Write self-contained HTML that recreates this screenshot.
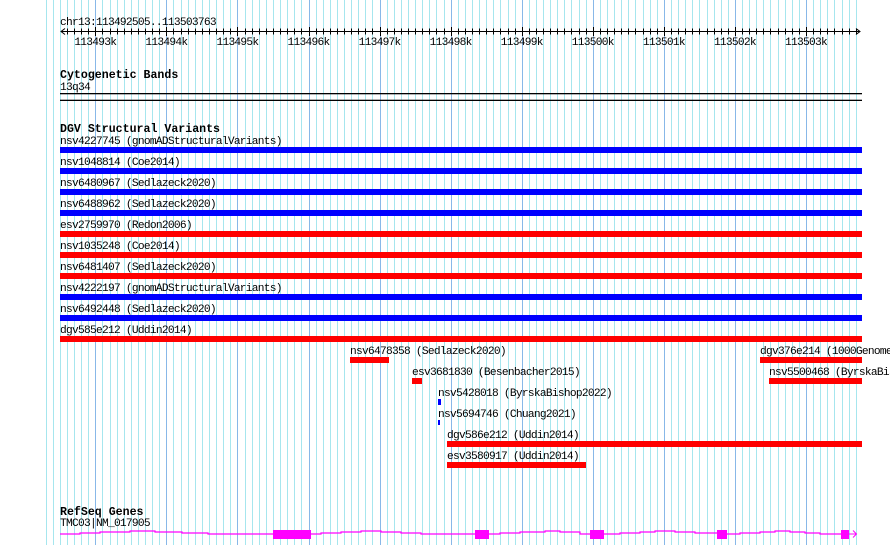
<!DOCTYPE html>
<html><head><meta charset="utf-8"><style>
html,body{margin:0;padding:0;background:#fff;width:890px;height:545px;overflow:hidden}
svg{display:block}
text{font-family:"Liberation Mono",monospace;font-size:11.2px;letter-spacing:-0.72px;fill:#000}
.b{font-weight:bold;font-size:11.6px;letter-spacing:0}
</style></head><body>
<svg id="s" width="890" height="545" xmlns="http://www.w3.org/2000/svg">
<g id="grid"></g>
<g id="ticks" stroke="#000" stroke-width="1"></g>
<text x="60" y="25">chr13:113492505..113503763</text>
<line x1="61" y1="31.5" x2="860" y2="31.5" stroke="#000"/>
<polyline points="65,28.5 61,31.5 65,34.5" fill="none" stroke="#000"/>
<polyline points="856,28.5 860,31.5 856,34.5" fill="none" stroke="#000"/>
<g id="lbl"></g>
<text class="b" x="60" y="78">Cytogenetic Bands</text>
<text x="60" y="90">13q34</text>
<rect x="60" y="93" width="802" height="1.3" fill="#000"/>
<rect x="60" y="99.7" width="802" height="1.3" fill="#000"/>
<text class="b" x="60" y="132">DGV Structural Variants</text>
<g id="rows"></g>
<text x="350" y="354">nsv6478358 (Sedlazeck2020)</text>
<rect x="350" y="357" width="39" height="6" fill="#f00"/>
<text x="412" y="375">esv3681830 (Besenbacher2015)</text>
<rect x="412" y="378" width="10" height="6" fill="#f00"/>
<text x="438" y="396">nsv5428018 (ByrskaBishop2022)</text>
<rect x="438" y="399" width="3" height="6" fill="#00f"/>
<text x="438" y="417">nsv5694746 (Chuang2021)</text>
<rect x="438" y="420" width="2" height="5" fill="#00f"/>
<text x="447" y="438">dgv586e212 (Uddin2014)</text>
<rect x="447" y="441" width="415" height="6" fill="#f00"/>
<text x="447" y="459">esv3580917 (Uddin2014)</text>
<rect x="447" y="462" width="139" height="6" fill="#f00"/>
<text x="760" y="354">dgv376e214 (1000Genomes)</text>
<rect x="760" y="357" width="102" height="6" fill="#f00"/>
<text x="769" y="375">nsv5500468 (ByrskaBishop2022)</text>
<rect x="769" y="378" width="93" height="6" fill="#f00"/>
<text class="b" x="60" y="515">RefSeq Genes</text>
<text x="60" y="526">TMC03|NM_017905</text>
<polyline fill="none" stroke="#f0f" stroke-width="1.2" points="60,534 80,534 80,533 100,533 100,532 130,532 130,531 155,531 155,532 182,532 182,533 208,533 208,534 273,534"/>
<polyline fill="none" stroke="#f0f" stroke-width="1.2" points="311,534 321,534 321,533 341,533 341,532 361,532 361,531 381,531 381,532 401,532 401,533 421,533 421,534 475,534"/>
<polyline fill="none" stroke="#f0f" stroke-width="1.2" points="489,534 500,534 500,533 520,533 520,532 545,532 545,531 560,531 560,532 580,532 580,534 590,534"/>
<polyline fill="none" stroke="#f0f" stroke-width="1.2" points="604,534 620,534 620,533 640,533 640,532 655,532 655,531 675,531 675,532 695,532 695,533 717,533"/>
<polyline fill="none" stroke="#f0f" stroke-width="1.2" points="727,534 740,534 740,533 760,533 760,532 775,532 775,531 790,531 790,532 805,532 805,533 820,533 820,534 841,534"/>
<rect x="273" y="530" width="38" height="9" fill="#f0f"/>
<rect x="475" y="530" width="14" height="9" fill="#f0f"/>
<rect x="590" y="530" width="14" height="9" fill="#f0f"/>
<rect x="717" y="530" width="10" height="9" fill="#f0f"/>
<rect x="841" y="530" width="8" height="9" fill="#f0f"/>
<line x1="849" y1="534" x2="856" y2="534" stroke="#f0f"/>
<polyline fill="none" stroke="#f0f" points="853,530.5 856.5,534 853,537.5"/>
</svg>
<script>
var ns="http://www.w3.org/2000/svg";
function el(p,t,a){var e=document.createElementNS(ns,t);for(var k in a)e.setAttribute(k,a[k]);p.appendChild(e);return e;}
var g=document.getElementById('grid'),tk=document.getElementById('ticks'),lb=document.getElementById('lbl');
var step=7.107,maj=95.3;
for(var j=-7;j<=120;j++){var x=maj+step*j;if(x>857)break;var xr=Math.round(x)+0.5;
var m=(j%10===0);
el(g,'line',{x1:xr,y1:0,x2:xr,y2:545,stroke:m?'#88b8e8':'#a6e6ee','stroke-width':1});
if(x>61&&x<857){el(tk,'line',{x1:xr,y1:m?27:28.5,x2:xr,y2:m?36:34.5});}
if(m){var t=el(lb,'text',{x:x,y:45,'text-anchor':'middle'});t.textContent=(113493+j/10)+'k';}}
var rows=[["nsv4227745 (gnomADStructuralVariants)","#00f"],["nsv1048814 (Coe2014)","#00f"],["nsv6480967 (Sedlazeck2020)","#00f"],["nsv6488962 (Sedlazeck2020)","#00f"],["esv2759970 (Redon2006)","#f00"],["nsv1035248 (Coe2014)","#f00"],["nsv6481407 (Sedlazeck2020)","#f00"],["nsv4222197 (gnomADStructuralVariants)","#00f"],["nsv6492448 (Sedlazeck2020)","#00f"],["dgv585e212 (Uddin2014)","#f00"]];
var r=document.getElementById('rows');
rows.forEach(function(a,i){var y=144+21*i;var t=el(r,'text',{x:60,y:y});t.textContent=a[0];el(r,'rect',{x:60,y:y+3,width:802,height:6,fill:a[1]});});
</script>
</body></html>
